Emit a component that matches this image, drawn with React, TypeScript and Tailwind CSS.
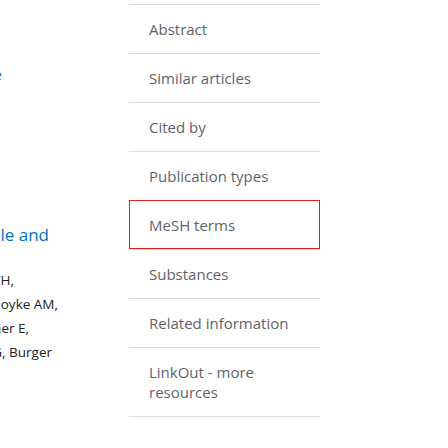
import React from "react";

const navItems = [
  "Abstract",
  "Similar articles",
  "Cited by",
  "Publication types",
  "MeSH terms",
  "Substances",
  "Related information",
  "LinkOut - more resources",
];

function Clip({ right, children, className }: { right: number; children: React.ReactNode; className?: string }) {
  return (
    <div className="flex justify-end overflow-visible" style={{ width: right }}>
      <span className={"shrink-0 whitespace-nowrap " + (className ?? "")}>{children}</span>
    </div>
  );
}

export default function App() {
  return (
    <div
      className="w-[448px] h-[448px] bg-white overflow-hidden flex"
      style={{ fontFamily: '"Open Sans", "Noto Sans", Arial, sans-serif' }}
    >
      <div className="w-[129px] shrink-0 overflow-hidden relative">
        <div className="pt-[64px]">
          <Clip right={2} className="text-[15px] leading-[20px] text-[#0071bc]">
            Journal of Medicine
          </Clip>
        </div>
        <div className="pt-[138px]">
          <Clip right={49} className="text-[17px] leading-[26px] text-[#0071bc]">
            A randomized trial of sample and
          </Clip>
        </div>
        <div className="pt-[20px] flex flex-col text-[13.5px] leading-[24px] text-[#212121]">
          <Clip right={14}>Smith J, Jones TH,</Clip>
          <Clip right={58}>Brown K, Hoyke AM,</Clip>
          <Clip right={29}>Weber R, Wagner E,</Clip>
          <Clip right={52}>Miller G, Burger</Clip>
        </div>
      </div>
      <nav className="w-[191px] shrink-0 pt-[4px]">
        <ul className="border-b border-[#dcdcdc]">
          {navItems.map((item) => (
            <li
              key={item}
              className={
                "border-t border-[#dcdcdc] pl-[20px] pr-[12px] py-[14px] text-[15px] leading-[20px] text-[#5f636a]" +
                (item === "MeSH terms" ? " outline outline-1 outline-offset-[-1px] outline-[#e0201f]" : "")
              }
            >
              {item}
            </li>
          ))}
        </ul>
      </nav>
    </div>
  );
}
